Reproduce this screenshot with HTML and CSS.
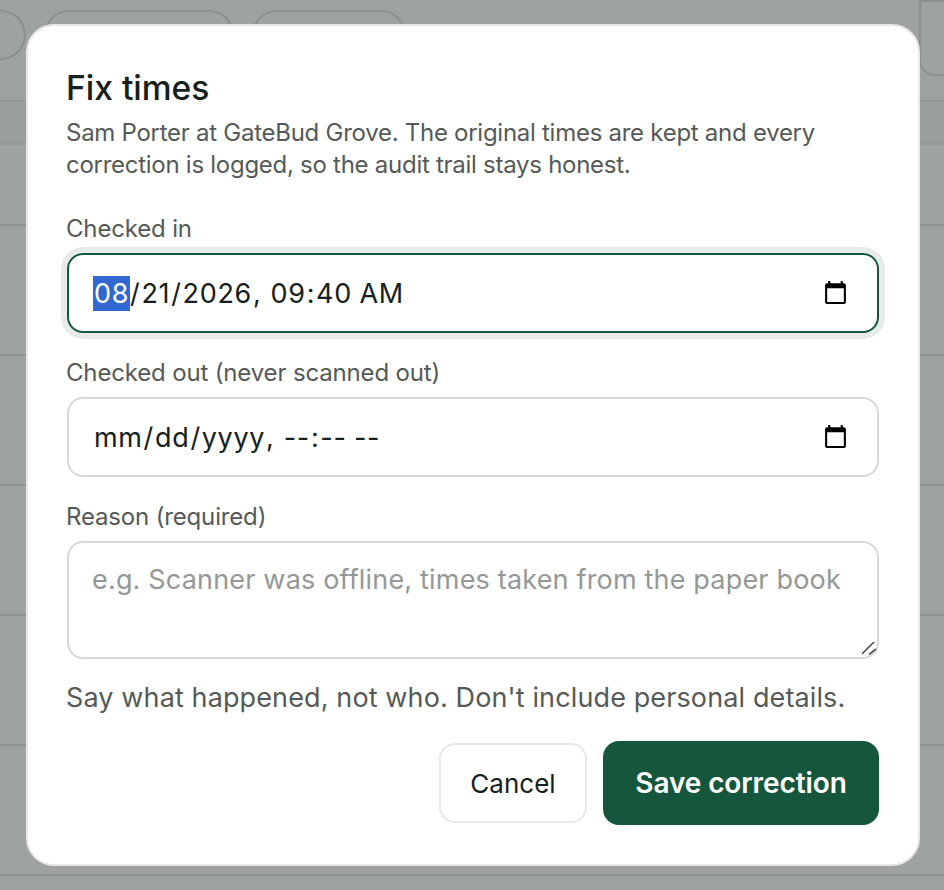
FILE: index.html
```html
<!DOCTYPE html>
<html lang="en">
<head>
    <meta charset="UTF-8">
    <meta name="viewport" content="width=device-width, initial-scale=1.0">
    <title>Fix times</title>
    <link rel="stylesheet" href="styles.css">
</head>
<body>
    <div class="page">
        <div class="filters">
            <span class="pill pill-first"></span>
            <span class="pill pill-second"></span>
            <span class="pill pill-third"></span>
            <span class="corner-box"></span>
        </div>
        <div class="table-head"></div>
        <div class="table-row table-row-first"></div>
        <div class="table-row"></div>
        <div class="table-row"></div>
        <div class="table-row"></div>
        <div class="table-row"></div>
        <div class="table-row"></div>
    </div>

    <div class="overlay">
        <form class="dialog">
            <h1>Fix times</h1>
            <p class="intro">Sam Porter at GateBud Grove. The original times are kept and every correction is logged, so the audit trail stays honest.</p>

            <label for="checkedIn">Checked in</label>
            <input type="datetime-local" id="checkedIn" name="checkedIn" value="2026-08-21T09:40" autofocus>

            <label for="checkedOut">Checked out (never scanned out)</label>
            <input type="datetime-local" id="checkedOut" name="checkedOut">

            <label for="reason">Reason (required)</label>
            <textarea id="reason" name="reason" placeholder="e.g. Scanner was offline, times taken from the paper book"></textarea>
            <p class="hint">Say what happened, not who. Don't include personal details.</p>

            <div class="actions">
                <button type="button" class="cancel-btn">Cancel</button>
                <button type="button" class="save-btn">Save correction</button>
            </div>
        </form>
    </div>
</body>
</html>
```

FILE: styles.css
```css
* {
    box-sizing: border-box;
}

html, body {
    height: 100%;
}

body {
    margin: 0;
    font-family: Inter, sans-serif;
    background: #f7f8f7;
    overflow: hidden;
}

.page {
    height: 890px;
}

.filters {
    display: flex;
    height: 100px;
    padding-top: 10px;
    gap: 18px;
}

.pill {
    display: block;
    height: 50px;
    border: 2px solid #d8dad8;
    border-radius: 26px;
}

.pill-first {
    width: 26px;
    border-left: 0;
    border-radius: 0 26px 26px 0;
}

.pill-second {
    width: 190px;
}

.pill-third {
    width: 154px;
}

.corner-box {
    width: 25px;
    height: 76px;
    margin: -10px 0 0 auto;
    border: 2px solid #d8dad8;
    border-right: 0;
    border-radius: 0 0 0 16px;
}

.table-head {
    height: 45px;
    background: #f0f1f0;
    border-top: 2px solid #e6e8e6;
    border-bottom: 2px solid #e6e8e6;
}

.table-row {
    height: 130px;
    border-bottom: 2px solid #e0e2e0;
}

.table-row-first {
    height: 81px;
}

.overlay {
    position: fixed;
    inset: 0;
    background: rgba(18, 28, 24, 0.39);
}

.dialog {
    position: absolute;
    top: 24px;
    left: 26px;
    width: 894px;
    height: 842px;
    padding: 42px 39px 40px 38px;
    background: #fff;
    border: 2px solid #e6e8e6;
    border-radius: 28px;
    display: flex;
    flex-direction: column;
}

h1 {
    margin: 0;
    font-size: 33.6px;
    line-height: 40px;
    font-weight: 500;
    color: #16201c;
}

.intro {
    margin: 9px 0 32px;
    font-size: 24px;
    line-height: 32px;
    letter-spacing: -0.27px;
    color: #555a57;
}

label {
    margin-bottom: 8px;
    font-size: 24px;
    line-height: 32px;
    letter-spacing: -0.16px;
    color: #555a57;
}

input {
    flex: none;
    width: 812px;
    height: 80px;
    margin: 0 0 24px 1px;
    padding: 0 26px 0 24px;
    font-family: Inter, sans-serif;
    font-size: 27px;
    letter-spacing: 0.65px;
    color: #16201c;
    background: #fff;
    border: 2px solid #d8d8d6;
    border-radius: 16px;
    outline: none;
}

input:focus {
    border-color: #15573c;
    box-shadow: 0 0 0 6px #e7ecea;
}

textarea {
    flex: none;
    width: 812px;
    height: 118px;
    margin-left: 1px;
    padding: 19px 23px;
    font-family: Inter, sans-serif;
    font-size: 27px;
    line-height: 36px;
    letter-spacing: 0.18px;
    color: #16201c;
    background: #fff;
    border: 2px solid #d8d8d6;
    border-radius: 16px;
    outline: none;
}

textarea::placeholder {
    color: #949896;
}

textarea::-webkit-resizer {
    background: url("data:image/svg+xml,%3Csvg xmlns='http://www.w3.org/2000/svg' width='15' height='15'%3E%3Cpath d='M0 12L13 -1M7 12.5L14 7' stroke='%23555' stroke-width='1.6' fill='none'/%3E%3C/svg%3E") no-repeat;
}

.hint {
    margin: 21px 0 0;
    font-size: 27px;
    line-height: 36px;
    letter-spacing: 0.12px;
    color: #555a57;
}

.actions {
    display: flex;
    justify-content: flex-end;
    align-items: center;
    gap: 16px;
    margin-top: 25px;
}

.cancel-btn {
    width: 148px;
    height: 80px;
    font-family: Inter, sans-serif;
    font-size: 26px;
    color: #16201c;
    background: #fff;
    border: 2px solid #e8e8e8;
    border-radius: 16px;
}

.save-btn {
    width: 276px;
    height: 84px;
    font-family: Inter, sans-serif;
    font-size: 28px;
    font-weight: 600;
    letter-spacing: -0.1px;
    color: #fff;
    background: #15573c;
    border: 0;
    border-radius: 16px;
}
```
